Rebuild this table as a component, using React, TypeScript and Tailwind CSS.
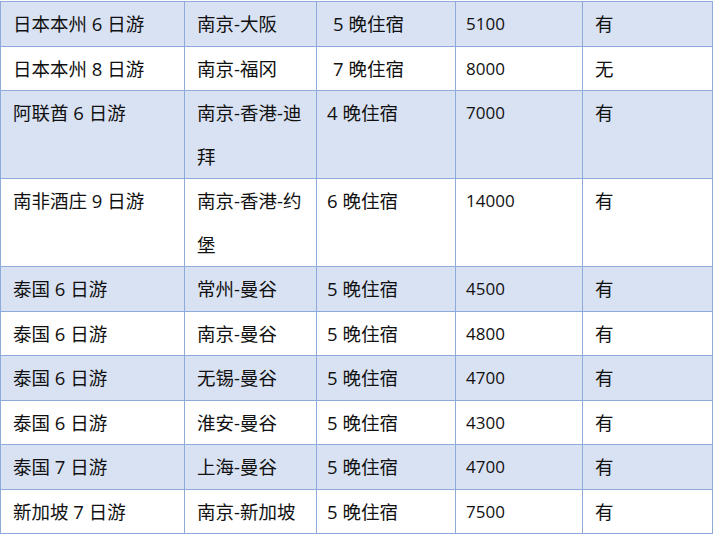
const rows = [
  { name: "日本本州 6 日游", route: "南京-大阪", nights: "5 晚住宿", indent: true, price: "5100", flag: "有" },
  { name: "日本本州 8 日游", route: "南京-福冈", nights: "7 晚住宿", indent: true, price: "8000", flag: "无" },
  { name: "阿联酋 6 日游", route: "南京-香港-迪拜", nights: "4 晚住宿", price: "7000", flag: "有" },
  { name: "南非酒庄 9 日游", route: "南京-香港-约堡", nights: "6 晚住宿", price: "14000", flag: "有" },
  { name: "泰国 6 日游", route: "常州-曼谷", nights: "5 晚住宿", price: "4500", flag: "有" },
  { name: "泰国 6 日游", route: "南京-曼谷", nights: "5 晚住宿", price: "4800", flag: "有" },
  { name: "泰国 6 日游", route: "无锡-曼谷", nights: "5 晚住宿", price: "4700", flag: "有" },
  { name: "泰国 6 日游", route: "淮安-曼谷", nights: "5 晚住宿", price: "4300", flag: "有" },
  { name: "泰国 7 日游", route: "上海-曼谷", nights: "5 晚住宿", price: "4700", flag: "有" },
  { name: "新加坡 7 日游", route: "南京-新加坡", nights: "5 晚住宿", price: "7500", flag: "有" },
];

const cell = "border border-[#8eaadb] align-top whitespace-normal";

export default function App() {
  return (
    <div className="h-[534px] w-[713px] overflow-hidden bg-white pt-[1px]">
      <table
        className="w-[712px] table-fixed border-collapse text-[18.5px] leading-[43.5px] text-[#111]"
        style={{ fontFamily: '"Open Sans", "Noto Sans CJK SC", sans-serif' }}
      >
        <colgroup>
          <col className="w-[184px]" />
          <col className="w-[132px]" />
          <col className="w-[139px]" />
          <col className="w-[127px]" />
          <col className="w-[130px]" />
        </colgroup>
        <tbody>
          {rows.map((r, i) => (
            <tr key={i} className={i % 2 === 0 ? "bg-[#d9e2f3]" : "bg-white"}>
              <td className={`${cell} pl-[12px] pr-2`}>{r.name}</td>
              <td className={`${cell} pl-[12px] pr-[8px]`}>{r.route}</td>
              <td className={`${cell} ${r.indent ? "pl-[16px]" : "pl-[10px]"} pr-2`}>{r.nights}</td>
              <td className={`${cell} pl-[10px] pr-2 text-[17px]`}>{r.price}</td>
              <td className={`${cell} pl-[12px] pr-2`}>{r.flag}</td>
            </tr>
          ))}
        </tbody>
      </table>
    </div>
  );
}
